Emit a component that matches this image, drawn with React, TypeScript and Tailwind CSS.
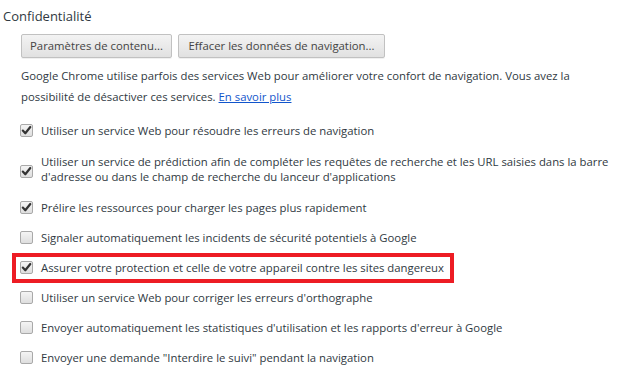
import { Fragment } from 'react'

interface Option {
  lines: string[]
  checked: boolean
  highlight?: boolean
}

const OPTIONS: Option[] = [
  { lines: ['Utiliser un service Web pour résoudre les erreurs de navigation'], checked: true },
  {
    lines: [
      "Utiliser un service de prédiction afin de compléter les requêtes de recherche et les URL saisies dans la barre",
      "d'adresse ou dans le champ de recherche du lanceur d'applications",
    ],
    checked: true,
  },
  { lines: ['Prélire les ressources pour charger les pages plus rapidement'], checked: true },
  { lines: ['Signaler automatiquement les incidents de sécurité potentiels à Google'], checked: false },
  {
    lines: ['Assurer votre protection et celle de votre appareil contre les sites dangereux'],
    checked: true,
    highlight: true,
  },
  { lines: ["Utiliser un service Web pour corriger les erreurs d'orthographe"], checked: false },
  { lines: ["Envoyer automatiquement les statistiques d'utilisation et les rapports d'erreur à Google"], checked: false },
  { lines: ['Envoyer une demande "Interdire le suivi" pendant la navigation'], checked: false },
]

function Checkbox({ checked, className = '' }: { checked: boolean; className?: string }) {
  return (
    <span
      className={`flex w-[13px] h-[13px] shrink-0 items-center justify-center rounded-[2px] border border-[#a9a9a9] bg-gradient-to-b from-[#f4f4f4] to-[#dedede] ${className}`}
    >
      {checked && (
        <svg width="11" height="11" viewBox="0 0 11 11">
          <path d="M1.8 5.6 L4.3 8.3 L9.3 2" fill="none" stroke="#333" strokeWidth="2.2" strokeLinecap="round" strokeLinejoin="round" />
        </svg>
      )}
    </span>
  )
}

export default function App() {
  return (
    <div className="w-[618px] h-[380px] bg-white text-[#303942] font-['Open_Sans',sans-serif] text-[11.33px] overflow-hidden">
      {/* Section title */}
      <h3 className="pt-[7px] pl-[3px] text-[13px] leading-[18px] text-[#303942]">Confidentialité</h3>

      {/* Buttons */}
      <div className="flex gap-[6px] mt-[9px] pl-[21px]">
        <button className="w-[151px] h-[24px] rounded-[2px] border border-[#c1c1c1] bg-gradient-to-b from-[#f3f3f3] to-[#e1e1e1] text-[#444] leading-[22px] shadow-[0_1px_0_rgba(0,0,0,0.06)]">
          Paramètres de contenu...
        </button>
        <button className="w-[207px] h-[24px] rounded-[2px] border border-[#c1c1c1] bg-gradient-to-b from-[#f3f3f3] to-[#e1e1e1] text-[#444] leading-[22px] shadow-[0_1px_0_rgba(0,0,0,0.06)]">
          Effacer les données de navigation...
        </button>
      </div>

      {/* Description */}
      <p className="mt-[7px] pl-[21px] leading-[21px] whitespace-nowrap">
        Google Chrome utilise parfois des services Web pour améliorer votre confort de navigation. Vous avez la
        <br />
        possibilité de désactiver ces services.{' '}
        <a href="#" className="text-[#15c] underline">
          En savoir plus
        </a>
      </p>

      {/* Options */}
      <div className="mt-[16px] pl-[20px] flex flex-col gap-[15px]">
        {OPTIONS.map((opt, i) => (
          <div
            key={i}
            className={`relative flex items-center gap-[8px] leading-[15px] ${opt.lines.length > 1 ? 'my-[1px]' : ''}`}
          >
            <Checkbox checked={opt.checked} className={opt.lines.length > 1 ? 'mt-[5px]' : ''} />
            <span className="whitespace-nowrap">
              {opt.lines.map((l, j) => (
                <Fragment key={j}>
                  {j > 0 && <br />}
                  {l}
                </Fragment>
              ))}
            </span>
            {opt.highlight && (
              <span className="absolute -left-[8px] -top-[7px] w-[442px] h-[30px] border-4 border-[#ed1c24] pointer-events-none" />
            )}
          </div>
        ))}
      </div>
    </div>
  )
}
